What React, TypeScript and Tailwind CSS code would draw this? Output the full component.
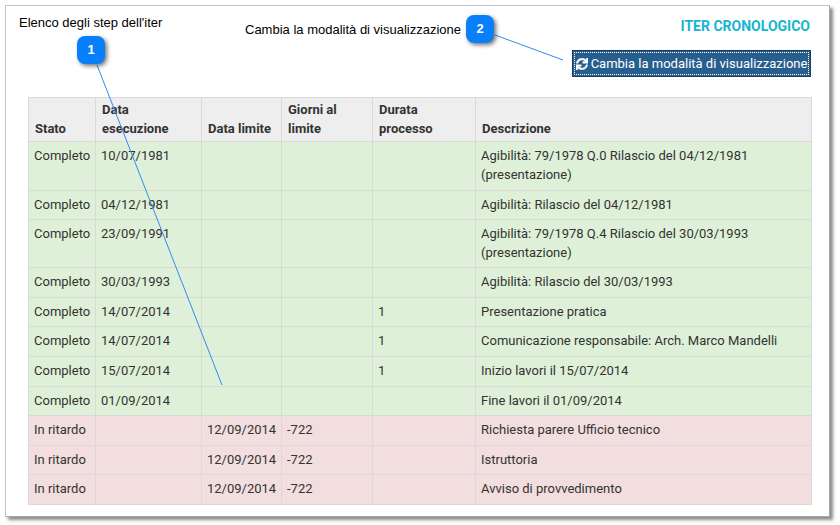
import React from "react";
import { FaSync } from "react-icons/fa";

type Row = { s: string; d?: string; l?: string; g?: string; p?: string; t: React.ReactNode; late?: boolean };

const rows: Row[] = [
  { s: "Completo", d: "10/07/1981", t: <>Agibilità: 79/1978 Q.0 Rilascio del 04/12/1981<br />(presentazione)</> },
  { s: "Completo", d: "04/12/1981", t: "Agibilità: Rilascio del 04/12/1981" },
  { s: "Completo", d: "23/09/1991", t: <>Agibilità: 79/1978 Q.4 Rilascio del 30/03/1993<br />(presentazione)</> },
  { s: "Completo", d: "30/03/1993", t: "Agibilità: Rilascio del 30/03/1993" },
  { s: "Completo", d: "14/07/2014", p: "1", t: "Presentazione pratica" },
  { s: "Completo", d: "14/07/2014", p: "1", t: "Comunicazione responsabile: Arch. Marco Mandelli" },
  { s: "Completo", d: "15/07/2014", p: "1", t: "Inizio lavori il 15/07/2014" },
  { s: "Completo", d: "01/09/2014", t: "Fine lavori il 01/09/2014" },
  { s: "In ritardo", l: "12/09/2014", g: "-722", t: "Richiesta parere Ufficio tecnico", late: true },
  { s: "In ritardo", l: "12/09/2014", g: "-722", t: "Istruttoria", late: true },
  { s: "In ritardo", l: "12/09/2014", g: "-722", t: "Avviso di provvedimento", late: true },
];

const th = "border border-[#d9d9d9] align-bottom text-left font-bold px-[6px] pt-[3px] pb-[3px]";
const td = "border border-[#d9d9d9] align-top px-[5px] py-[5px]";

function Badge({ n, className }: { n: string; className: string }) {
  return (
    <div
      className={
        "absolute w-[28px] h-[28px] rounded-[8px] bg-[#0880fb] text-white font-bold text-[13px] font-['Liberation_Sans',sans-serif] flex items-center justify-center shadow-[2px_2px_4px_rgba(0,0,0,0.55)] " +
        className
      }
    >
      {n}
    </div>
  );
}

export default function App() {
  return (
    <div className="relative w-[840px] h-[525px] bg-white overflow-hidden font-['Roboto',sans-serif]">
      <div className="relative ml-[5px] mt-[5px] w-[825px] h-[512px] bg-white border border-[#c4c4c4] border-r-[#a8a8a8] border-b-[#a8a8a8] shadow-[3px_3px_3px_rgba(0,0,0,0.45)]">
        <div className="flex flex-col pl-[22px] pr-[18px]">
          <div className="flex justify-end pt-[10px] pr-[1px] h-[44px]">
            <span className="text-[#14b6cf] font-bold text-[14px] leading-[20px]">ITER CRONOLOGICO</span>
          </div>
          <div className="flex justify-end">
            <button className="w-[239px] h-[27px] bg-[#285e8e] border border-[#1d3f5e] p-px text-white">
              <span className="w-full h-full border border-dotted border-white flex items-center justify-center gap-[3px] text-[13px] whitespace-nowrap">
                <FaSync className="w-[12px] h-[12px] shrink-0 stroke-[20px]" />
                <span>Cambia la modalità di visualizzazione</span>
              </span>
            </button>
          </div>
          <table className="mt-[20.2px] w-[784px] table-fixed border-collapse text-[13px] leading-[18.57px] text-[#333333]">
            <colgroup>
              <col className="w-[67px]" />
              <col className="w-[106px]" />
              <col className="w-[80px]" />
              <col className="w-[91px]" />
              <col className="w-[103px]" />
              <col />
            </colgroup>
            <thead>
              <tr className="bg-[#eeeeee] h-[44.3px]">
                <th className={th}>Stato</th>
                <th className={th}>Data<br />esecuzione</th>
                <th className={th}>Data limite</th>
                <th className={th}>Giorni al<br />limite</th>
                <th className={th}>Durata<br />processo</th>
                <th className={th}>Descrizione</th>
              </tr>
            </thead>
            <tbody>
              {rows.map((r, i) => (
                <tr key={i} className={r.late ? "bg-[#f2dede]" : "bg-[#dff0d8]"}>
                  <td className={td}>{r.s}</td>
                  <td className={td}>{r.d}</td>
                  <td className={td}>{r.l}</td>
                  <td className={td}>{r.g}</td>
                  <td className={td}>{r.p}</td>
                  <td className={td}>{r.t}</td>
                </tr>
              ))}
            </tbody>
          </table>
        </div>
      </div>

      <span className="absolute left-[19px] top-[14px] text-[13px] leading-[18px] text-black font-['Liberation_Sans',sans-serif]">Elenco degli step dell'iter</span>
      <span className="absolute left-[245px] top-[21px] text-[13px] leading-[18px] text-black font-['Liberation_Sans',sans-serif]">Cambia la modalità di visualizzazione</span>

      <svg className="absolute left-0 top-0" width="840" height="525" fill="none">
        <line x1="97" y1="65" x2="222" y2="385" stroke="#2d8cf0" strokeWidth="1" />
        <line x1="495" y1="35" x2="563" y2="60" stroke="#2d8cf0" strokeWidth="1" />
      </svg>

      <Badge n="1" className="left-[77px] top-[36px]" />
      <Badge n="2" className="left-[466px] top-[15px]" />
    </div>
  );
}
